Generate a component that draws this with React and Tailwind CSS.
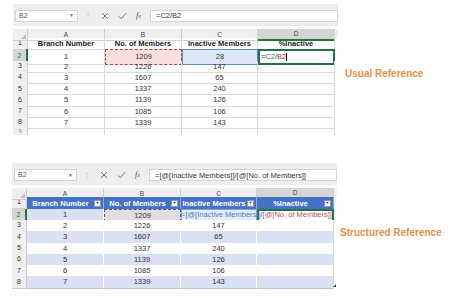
const rows = [
  [1, 1209, 28],
  [2, 1226, 147],
  [3, 1607, 65],
  [4, 1337, 240],
  [5, 1139, 126],
  [6, 1085, 106],
  [7, 1339, 143],
];

const cols = "grid grid-cols-[15px_77px_77px_76px_77px]";

const FormulaBar = ({ formula }) => (
  <div className="h-[22px] w-[325px] bg-[#eeeeee] flex items-start pt-[6px] pl-[2px]">
    <div className="h-[12px] w-[63px] bg-white border border-[#d4d4d4] flex items-center justify-between px-[3px] text-[7px] text-[#555]">
      <span>B2</span>
      <span className="text-[5px] text-[#777]">▼</span>
    </div>
    <div className="w-[20px] h-[12px] flex items-center justify-center text-[8px] text-[#bbb]">⋮</div>
    <div className="h-[12px] w-[52px] flex items-center gap-[9px] pl-[3px]">
      <svg width="8" height="8" viewBox="0 0 8 8">
        <path d="M1 1L7 7M7 1L1 7" stroke="#666" strokeWidth="0.9" />
      </svg>
      <svg width="9" height="8" viewBox="0 0 9 8">
        <path d="M1 4.5L3.3 6.8L8 1.2" stroke="#666" strokeWidth="0.9" fill="none" />
      </svg>
      <span className="text-[8px] italic text-[#555]" style={{ fontFamily: "'Liberation Serif', serif" }}>
        f<span className="text-[6px]">x</span>
      </span>
    </div>
    <div className="h-[12px] flex-1 bg-white border border-[#d4d4d4] flex items-center pl-[5px] text-[7.5px] text-[#333] whitespace-nowrap overflow-hidden">
      {formula}
    </div>
  </div>
);

const ColHeader = () => (
  <div className={`${cols} h-[9px] bg-[#efefef] text-[6.5px] text-[#444]`}>
    <div className="border-r border-b border-[#cfcfcf] relative">
      <div className="absolute right-[1px] bottom-[1px] w-0 h-0 border-l-[5px] border-l-transparent border-b-[5px] border-b-[#bdbdbd]" />
    </div>
    {["A", "B", "C"].map((c) => (
      <div key={c} className="border-r border-b border-[#cfcfcf] flex items-center justify-center">
        {c}
      </div>
    ))}
    <div className="bg-[#d5d5d5] border-r border-b-2 border-b-[#217346] border-r-[#cfcfcf] flex items-center justify-center">D</div>
  </div>
);

const UsualSheet = () => (
  <div className="w-[325px]">
    <FormulaBar formula="=C2/B2" />
    <div className="h-[3px]" />
    <ColHeader />
    <div className={`${cols} h-[11.3px] text-[7.5px] text-[#222]`}>
      <div className="bg-[#efefef] border-r border-b border-[#cfcfcf] flex items-center justify-center text-[7px]">1</div>
      {["Branch Number", "No. of Members", "Inactive Members", "%Inactive"].map((h) => (
        <div key={h} className="border-r border-b border-[#dadada] flex items-center justify-center font-bold whitespace-nowrap">
          {h}
        </div>
      ))}
    </div>
    {rows.map((r, i) => {
      const sel = i === 0;
      return (
        <div key={i} className={`${cols} h-[11.3px] text-[7.5px] text-[#333]`}>
          <div
            className={`border-b border-[#cfcfcf] flex items-center justify-center text-[7px] ${
              sel ? "bg-[#d5d5d5] border-r-2 border-r-[#217346] text-[#217346]" : "bg-[#efefef] border-r"
            }`}
          >
            {i + 2}
          </div>
          <div className="border-r border-b border-[#dadada] flex items-center justify-center">{r[0]}</div>
          <div
            className={`flex items-center justify-center ${
              sel ? "bg-[#f7dfda] border border-dashed border-[#9e4a46]" : "border-r border-b border-[#dadada]"
            }`}
          >
            {r[1]}
          </div>
          <div
            className={`flex items-center justify-center ${
              sel ? "bg-[#dde8f6] border border-[#5b8ac6]" : "border-r border-b border-[#dadada]"
            }`}
          >
            {r[2]}
          </div>
          <div
            className={`flex items-center ${
              sel ? "border-2 border-[#217346] pl-[1px]" : "border-r border-b border-[#dadada]"
            }`}
          >
            {sel && (
              <span className="text-[7.5px] whitespace-nowrap">
                <span className="text-[#333]">=</span>
                <span className="text-[#3d6fb6]">C2</span>
                <span className="text-[#333]">/</span>
                <span className="text-[#b04040]">B2</span>
                <span className="inline-block w-[0.5px] h-[8px] bg-black align-middle" />
              </span>
            )}
          </div>
        </div>
      );
    })}
    <div className={`${cols} h-[7px] text-[#888]`}>
      <div className="bg-[#efefef] border-r border-[#cfcfcf] flex justify-center items-start text-[5.5px] leading-[6px]">9</div>
      <div className="border-r border-[#dadada]" />
      <div className="border-r border-[#dadada]" />
      <div className="border-r border-[#dadada]" />
      <div className="border-r border-[#dadada]" />
    </div>
  </div>
);

const Dropdown = () => (
  <div className="w-[7px] h-[7px] bg-white border border-[#9a9a9a] flex items-center justify-center shrink-0">
    <span className="text-[4px] leading-none text-[#333]">▼</span>
  </div>
);

const StructuredSheet = () => (
  <div className="w-[325px]">
    <FormulaBar formula="=[@[Inactive Members]]/[@[No. of Members]]" />
    <div className="h-[3px]" />
    <ColHeader />
    <div className={`${cols} h-[11.3px] text-[7.5px]`}>
      <div className="bg-[#efefef] border-r border-b border-[#cfcfcf] flex items-center justify-center text-[7px] text-[#222]">1</div>
      {["Branch Number", "No. of Members", "Inactive Members", "%Inactive"].map((h) => (
        <div key={h} className="bg-[#4472c4] border-r border-[#8eaadb] flex items-center pr-[2px] overflow-hidden">
          <span className="flex-1 text-center font-bold text-white whitespace-nowrap overflow-hidden">{h}</span>
          <Dropdown />
        </div>
      ))}
    </div>
    {rows.map((r, i) => {
      const sel = i === 0;
      const band = i % 2 === 0 ? "bg-[#d9e1f2]" : "bg-white";
      return (
        <div key={i} className={`${cols} h-[11.3px] text-[7.5px] text-[#333] relative`}>
          <div
            className={`border-b border-[#cfcfcf] flex items-center justify-center text-[7px] ${
              sel ? "bg-[#d5d5d5] border-r-2 border-r-[#217346] text-[#217346]" : "bg-[#efefef] border-r"
            }`}
          >
            {i + 2}
          </div>
          <div className={`${band} border-r border-[#ffffff] border-b border-b-[#b4c6e7] flex items-center justify-center`}>{r[0]}</div>
          <div
            className={`flex items-center justify-center ${
              sel ? "bg-[#e3dbe6] border border-dashed border-[#555]" : `${band} border-r border-[#ffffff] border-b border-b-[#b4c6e7]`
            }`}
          >
            {r[1]}
          </div>
          <div
            className={`flex items-center justify-center ${
              sel ? "bg-[#e4ecf7] border border-[#7fa3d6]" : `${band} border-r border-[#ffffff] border-b border-b-[#b4c6e7]`
            }`}
          >
            {!sel && r[2]}
          </div>
          <div
            className={`flex items-center ${
              sel ? "bg-white border-2 border-[#217346]" : `${band} border-r border-[#dadada] border-b border-b-[#b4c6e7]`
            }`}
          />
          {sel && (
            <span className="absolute left-[169px] top-[1px] text-[7.5px] leading-[9px] whitespace-nowrap">
              <span className="text-[#4a7cc6]">=[@[Inactive Members]]</span>
              <span className="text-[#333]">/</span>
              <span className="text-[#c0506a]">[@[No. of Members]]</span>
            </span>
          )}
          {i === rows.length - 1 && (
            <div className="absolute right-[1px] bottom-[1px] w-0 h-0 border-l-[3px] border-l-transparent border-b-[3px] border-b-[#444]" />
          )}
        </div>
      );
    })}
  </div>
);

const Label = ({ children, className }) => (
  <div className={`text-[10px] font-bold text-[#e2914a] whitespace-nowrap ${className}`}>{children}</div>
);

export default function App() {
  return (
    <div
      className="w-[474px] h-[298px] bg-white overflow-hidden flex flex-col pt-[4px]"
      style={{ fontFamily: "'Liberation Sans', Arial, sans-serif" }}
    >
      <div className="flex pl-[13px]">
        <UsualSheet />
        <Label className="ml-[7px] mt-[62px]">Usual Reference</Label>
      </div>
      <div className="flex pl-[12px] mt-[28px]">
        <StructuredSheet />
        <Label className="ml-[3px] mt-[62px]">Structured Reference</Label>
      </div>
    </div>
  );
}
